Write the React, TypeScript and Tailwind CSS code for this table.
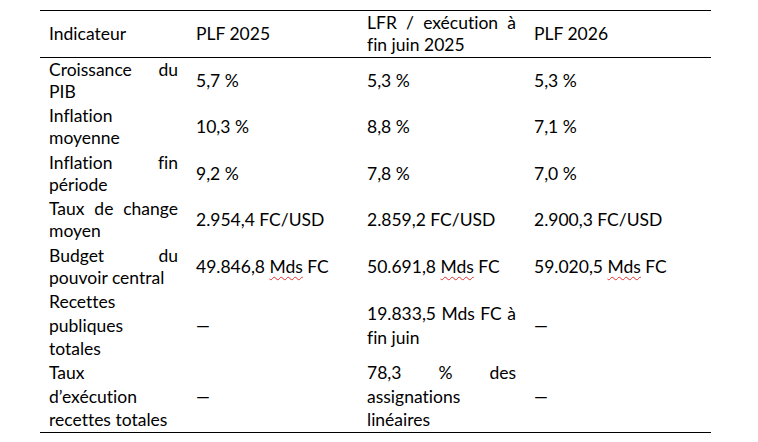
import React from 'react';

// a line is either plain text or { j: text } for a justified line
type Line = React.ReactNode | { j: React.ReactNode };
type Cell = Line[];

type Row = {
  cells: Cell[];
  tall?: boolean;
};

const Mds = () => (
  <span className="underline decoration-wavy decoration-[#e03030] decoration-1 underline-offset-[3px]">Mds</span>
);

const rows: Row[] = [
  { cells: [[{ j: 'Croissance du' }, 'PIB'], ['5,7 %'], ['5,3 %'], ['5,3 %']] },
  { cells: [['Inflation', 'moyenne'], ['10,3 %'], ['8,8 %'], ['7,1 %']] },
  { cells: [[{ j: 'Inflation fin' }, 'période'], ['9,2 %'], ['7,8 %'], ['7,0 %']] },
  { cells: [[{ j: 'Taux de change' }, 'moyen'], ['2.954,4 FC/USD'], ['2.859,2 FC/USD'], ['2.900,3 FC/USD']] },
  {
    cells: [
      [{ j: 'Budget du' }, 'pouvoir central'],
      [<>49.846,8 <Mds /> FC</>],
      [<>50.691,8 <Mds /> FC</>],
      [<>59.020,5 <Mds /> FC</>],
    ],
  },
  {
    tall: true,
    cells: [['Recettes', 'publiques', 'totales'], ['—'], [{ j: '19.833,5 Mds FC à' }, 'fin juin'], ['—']],
  },
  {
    tall: true,
    cells: [['Taux', 'd’exécution', 'recettes totales'], ['—'], [{ j: '78,3 % des' }, 'assignations', 'linéaires'], ['—']],
  },
];

const isJ = (l: Line): l is { j: React.ReactNode } =>
  typeof l === 'object' && l !== null && !React.isValidElement(l) && 'j' in (l as object);

function CellLines({ lines }: { lines: Cell }) {
  return (
    <>
      {lines.map((l, i) =>
        isJ(l) ? (
          <div key={i} className="text-justify [text-align-last:justify]">{l.j}</div>
        ) : (
          <div key={i}>{l}</div>
        )
      )}
    </>
  );
}

export default function App() {
  return (
    <div className="w-[758px] h-[442px] bg-white pt-[10px] pl-[40px] text-black font-['Lato','Noto_Sans',sans-serif] text-[17.5px] leading-[22px] [font-variant-ligatures:none]">
      <table className="border-collapse table-fixed w-[671px] border-y border-black">
        <colgroup>
          <col className="w-[147px]" />
          <col className="w-[171px]" />
          <col className="w-[167px]" />
          <col className="w-[186px]" />
        </colgroup>
        <thead>
          <tr className="h-[47px] border-b border-black">
            <th className="px-[9px] font-normal text-left align-middle">Indicateur</th>
            <th className="px-[9px] font-normal text-left align-middle">PLF 2025</th>
            <th className="px-[9px] font-normal text-left align-middle">
              <CellLines lines={[{ j: 'LFR / exécution à' }, 'fin juin 2025']} />
            </th>
            <th className="px-[9px] font-normal text-left align-middle">PLF 2026</th>
          </tr>
        </thead>
        <tbody>
          {rows.map((r, ri) => (
            <tr key={ri} className={r.tall ? 'h-[71px] leading-[23.5px]' : 'h-[46.5px]'}>
              {r.cells.map((c, ci) => (
                <td key={ci} className="px-[9px] align-middle whitespace-nowrap">
                  <CellLines lines={c} />
                </td>
              ))}
            </tr>
          ))}
        </tbody>
      </table>
    </div>
  );
}
